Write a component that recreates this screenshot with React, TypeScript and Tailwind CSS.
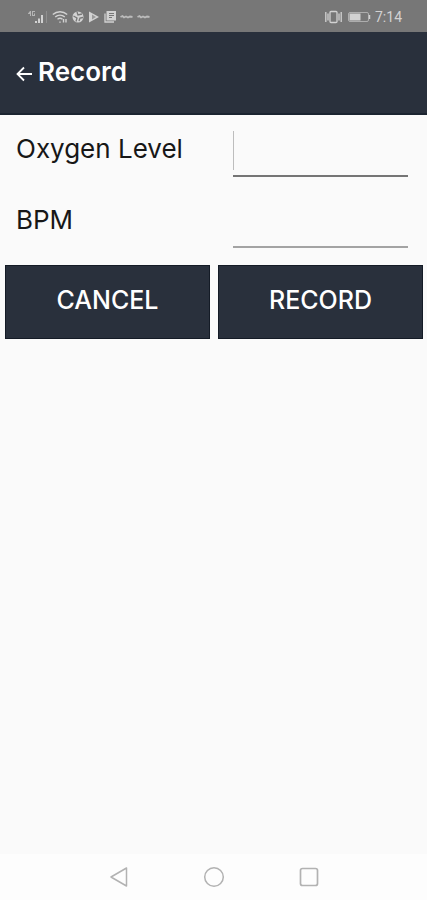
import { useState } from 'react';

const fields = [
  { id: 'oxygen', label: 'Oxygen Level', line: 'border-[#757575]', active: true },
  { id: 'bpm', label: 'BPM', line: 'border-[#a3a3a3]', active: false },
];

function StatusBar() {
  return (
    <div className="flex h-8 items-center justify-between bg-[#777777] pl-7 pr-[25px] pt-0.5 text-[#d2d2d2]">
      <div className="flex items-center gap-1">
        <svg width="20" height="14" viewBox="0 0 20 14" fill="currentColor" aria-label="Mobile signal">
          <path d="M0 3.500 2 1h1v5H2V4H0zM4 1h3v1H5v3h1V3.500h1V6H4z" opacity=".7" />
          <path d="M7 11h2v2H7zM10 8.500h2V13h-2zM13 5h2v8h-2z" />
          <path d="M18 1h1v12h-1z" opacity=".25" />
        </svg>
        <svg width="16" height="14" viewBox="0 0 16 14" fill="none" stroke="currentColor" strokeWidth="1.400" aria-label="Wi-Fi">
          <path d="M.8 4.500C5 .8 11 .8 15.200 4.500M3.200 7C6 4.600 10 4.600 12.800 7M5.500 9.300c1.500-1.200 3.500-1.200 5 0" />
          <path d="M8 11.500v1.300M11.500 9v3.500M14 9v3.500" />
        </svg>
        <svg width="12" height="14" viewBox="0 0 12 14" aria-hidden="true">
          <circle cx="6" cy="7" r="5.500" fill="currentColor" />
          <path d="M1.500 6 5 8l-1 3.500M5 2l1 3 4-1M7 11l1-3 3-.5" fill="none" stroke="#777777" strokeWidth="1.300" />
        </svg>
        <svg width="12" height="14" viewBox="0 0 12 14" aria-hidden="true">
          <path d="M1 1.500 11 7 1 12.500z" fill="currentColor" />
          <path d="M4 4.500v5L8 7z" fill="#999999" />
        </svg>
        <svg width="12" height="14" viewBox="0 0 12 14" aria-hidden="true">
          <path d="M2.500 1H12v9.500H2.500z" fill="currentColor" />
          <path d="M1 3.500V12h9" fill="none" stroke="currentColor" strokeWidth="1.300" />
          <path d="M5 3.500h5M5 5.500h5M5 7.500h3" stroke="#777777" />
        </svg>
        {[0, 1].map((n) => (
          <svg key={n} width="13" height="14" viewBox="0 0 13 14" fill="none" stroke="currentColor" strokeWidth="1.800" opacity=".75" aria-hidden="true">
            <path d="M.5 7 2.500 6l1.500 1.500L6 6.500l2 1 2-1 2.500.5" />
          </svg>
        ))}
      </div>
      <div className="flex items-center gap-1">
        <svg width="17" height="14" viewBox="0 0 17 14" fill="none" stroke="currentColor" strokeWidth="1.300" aria-label="Vibrate">
          <rect x="5" y="1.500" width="7" height="11" rx="1" />
          <path d="M3 3.500v7M.8 2v10M14 3.500v7M16.200 2v10" />
        </svg>
        <svg className="ml-0.5" width="23" height="12" viewBox="0 0 23 12" aria-label="Battery">
          <rect x=".5" y="1.500" width="20" height="9" rx="1.500" fill="none" stroke="currentColor" opacity=".6" />
          <path d="M1.500 2.500h11v7h-11z" fill="currentColor" />
          <path d="M21.500 4v4" stroke="currentColor" strokeWidth="1.500" />
        </svg>
        <span className="font-[Roboto,sans-serif] text-sm">7:14</span>
      </div>
    </div>
  );
}

function NavBar() {
  return (
    <nav className="flex h-[46px] items-center justify-center gap-[71px] bg-[#fdfdfd] text-[#b2b2b2]">
      <button type="button" aria-label="Back">
        <svg width="24" height="24" viewBox="0 0 24 24" fill="none" stroke="currentColor" strokeWidth="1.500" strokeLinejoin="round">
          <path d="M19.500 3v18L4 12z" />
        </svg>
      </button>
      <button type="button" aria-label="Home">
        <svg width="24" height="24" viewBox="0 0 24 24" fill="none" stroke="currentColor" strokeWidth="1.500">
          <circle cx="12" cy="12" r="9.300" />
        </svg>
      </button>
      <button type="button" aria-label="Recent apps">
        <svg width="24" height="24" viewBox="0 0 24 24" fill="none" stroke="currentColor" strokeWidth="1.700">
          <rect x="3.500" y="3.500" width="17" height="17" rx="2" />
        </svg>
      </button>
    </nav>
  );
}

export default function App() {
  const [values, setValues] = useState<Record<string, string>>({ oxygen: '', bpm: '' });

  return (
    <div className="flex min-h-screen flex-col bg-[#fafafa] font-[Inter,sans-serif] text-[#171717]">
      <StatusBar />

      <header className="flex h-[83px] items-center gap-1 border-b-2 border-[#1b2430] bg-[#29303c] px-4 pb-0.5 text-white">
        <button type="button" aria-label="Go back" className="pt-1">
          <svg width="18" height="18" viewBox="0 0 18 18" fill="none" stroke="currentColor" strokeWidth="1.800">
            <path d="M16 9H1.500M8 2.500 1.500 9 8 15.500" />
          </svg>
        </button>
        <h1 className="text-[26px] font-semibold leading-9">Record</h1>
      </header>

      <main className="flex-1">
        <form onSubmit={(e) => e.preventDefault()}>
          <div className="flex flex-col gap-[25px] pt-4 pr-[19px] pl-4">
            {fields.map((field) => (
              <div key={field.id} className="grid grid-cols-[217fr_175fr]">
                <label htmlFor={field.id} className="text-[26px] leading-9">
                  {field.label}
                </label>
                <div className="relative">
                  <input
                    id={field.id}
                    inputMode="numeric"
                    value={values[field.id]}
                    onChange={(e) => setValues({ ...values, [field.id]: e.target.value })}
                    className={`h-[46px] w-full border-b-2 bg-transparent text-2xl outline-none ${field.line}`}
                  />
                  {/* text cursor */}
                  {field.active && !values[field.id] && (
                    <span className="pointer-events-none absolute left-0 top-0 h-[39px] w-px bg-[#bdbdbd]" />
                  )}
                </div>
              </div>
            ))}
          </div>

          <div className="mt-[17px] grid grid-cols-2 gap-2 pr-1 pl-[5px] text-[25px] font-medium text-white">
            <button type="button" className="h-[74px] border border-[#141b26] bg-[#29303c] pb-0.5">
              CANCEL
            </button>
            <button type="submit" className="h-[74px] border border-[#141b26] bg-[#29303c] pb-0.5">
              RECORD
            </button>
          </div>
        </form>
      </main>

      <NavBar />
    </div>
  );
}
